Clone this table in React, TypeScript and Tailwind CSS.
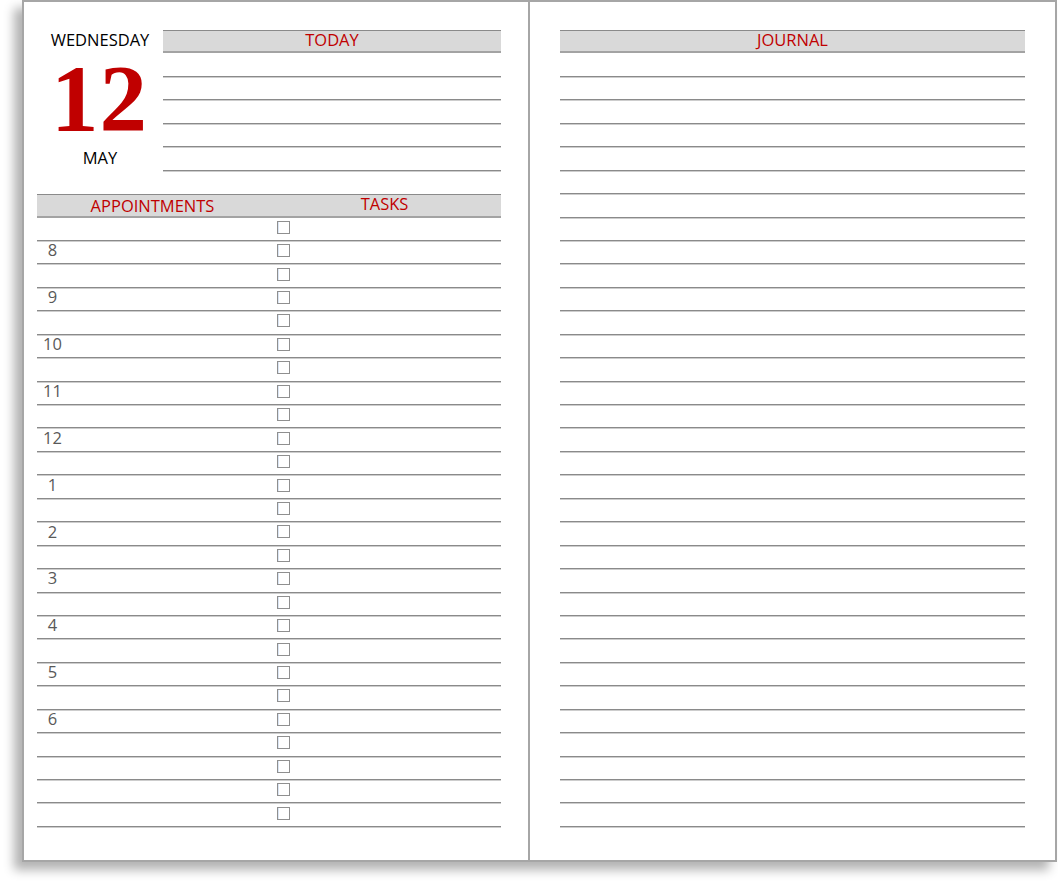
import React from "react";

const font = { fontFamily: '"Open Sans", "Liberation Sans", sans-serif' };

const HOURS: Record<number, string> = {
  1: "8",
  3: "9",
  5: "10",
  7: "11",
  9: "12",
  11: "1",
  13: "2",
  15: "3",
  17: "4",
  19: "5",
  21: "6",
};

function Header({ children }: { children: React.ReactNode }) {
  return (
    <div className="h-[23.44px] flex items-center justify-center bg-[#d9d9d9] border-t border-t-[#8a8a8a] border-b-2 border-b-[#a3a3a3] text-[16.5px] text-[#c00000] pb-[2px]">
      {children}
    </div>
  );
}

function Line() {
  return <div className="h-[23.44px] border-b border-b-[#8a8a8a] shadow-[0_1px_0_#cdcdcd]" />;
}

export default function App() {
  return (
    <div className="w-[1058px] h-[884px] bg-white overflow-hidden" style={font}>
      <div className="ml-[22px] w-[1035px] h-[862px] border-2 border-[#a6a6a6] bg-white shadow-[-8px_8px_10px_rgba(0,0,0,0.3)] flex">
        {/* Left page */}
        <div className="w-[504px] pl-[13px] pr-[27px] pt-[28px] flex flex-col">
          <div className="flex">
            <div className="w-[126px] flex flex-col items-center text-black text-[16.5px]">
              <div className="h-[23.44px] flex items-center justify-center pb-[5px] leading-[17px]">WEDNESDAY</div>
              <div
                className="h-[92px] leading-[92px] text-[95px] font-bold text-[#c00000] -ml-[1px] tracking-[1px]"
                style={{ fontFamily: '"Liberation Serif", "Times New Roman", serif' }}
              >
                12
              </div>
              <div className="h-[25px] flex items-center justify-center leading-[17px]">MAY</div>
            </div>
            <div className="flex-1 flex flex-col">
              <Header>TODAY</Header>
              {Array.from({ length: 5 }).map((_, i) => (
                <Line key={i} />
              ))}
              <div className="h-[23.44px]" />
            </div>
          </div>
          <div className="flex h-[23.44px] bg-[#d9d9d9] border-t border-t-[#8a8a8a] border-b-2 border-b-[#a3a3a3] text-[16.5px] text-[#c00000]">
            <div className="w-[231px] flex items-center justify-center pt-[2px]">APPOINTMENTS</div>
            <div className="flex-1 flex items-center justify-center pb-[2px]">TASKS</div>
          </div>
          {Array.from({ length: 26 }).map((_, i) => (
            <div
              key={i}
              className="h-[23.44px] flex border-b border-b-[#8a8a8a] shadow-[0_1px_0_#cdcdcd]"
            >
              <div className="w-[231px] flex items-center pb-[3px] text-[16.5px] text-[#595959]">
                <div className="w-[31px] text-center">{HOURS[i] ?? ""}</div>
              </div>
              <div className="flex-1 flex items-center pl-[9px] pb-[3px]">
                <div className="w-[13px] h-[13px] border border-[#8f8f8f] bg-white shadow-[inset_1px_0_0_#dbe6f5]" />
              </div>
            </div>
          ))}
        </div>
        {/* Divider */}
        <div className="w-[2px] bg-[#a6a6a6]" />
        {/* Right page */}
        <div className="flex-1 pl-[30px] pr-[30px] pt-[28px] flex flex-col">
          <Header>JOURNAL</Header>
          {Array.from({ length: 33 }).map((_, i) => (
            <Line key={i} />
          ))}
        </div>
      </div>
    </div>
  );
}
